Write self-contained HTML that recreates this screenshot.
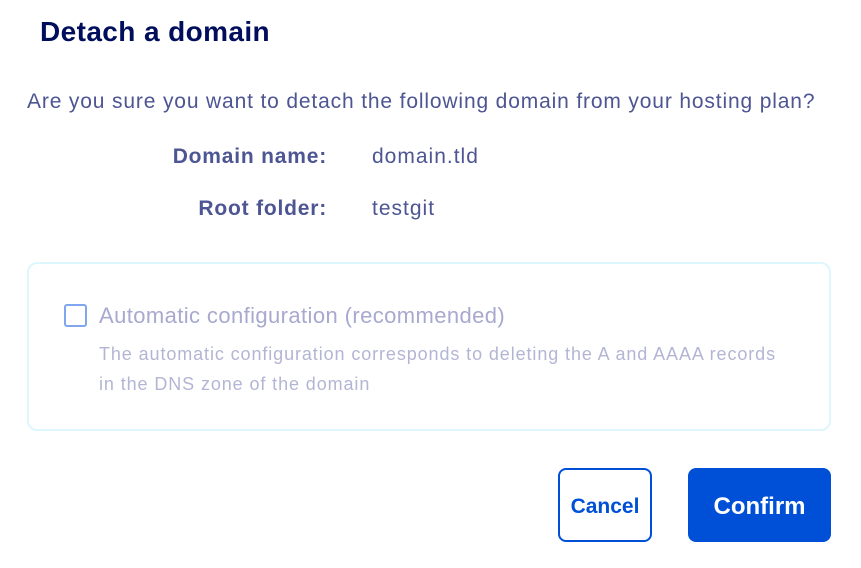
<!DOCTYPE html>
<html><head><style>
body{margin:0;width:861px;height:568px;background:#fff;font-family:"Liberation Sans",sans-serif;position:relative;overflow:hidden}
.a{position:absolute;white-space:nowrap}
</style></head><body>
<div class="a" style="left:40px;top:16px;font-size:28px;font-weight:bold;color:#000e5c;letter-spacing:0.4px">Detach a domain</div>
<div class="a" style="left:27px;top:90px;font-size:21px;color:#4d5592;letter-spacing:0.85px">Are you sure you want to detach the following domain from your hosting plan?</div>
<div class="a" style="left:0;width:327px;text-align:right;top:145px;font-size:21px;font-weight:bold;color:#4d5592;letter-spacing:0.8px">Domain name:</div>
<div class="a" style="left:372px;top:145px;font-size:21px;color:#4d5592;letter-spacing:1px">domain.tld</div>
<div class="a" style="left:0;width:327px;text-align:right;top:197px;font-size:21px;font-weight:bold;color:#4d5592;letter-spacing:0.8px">Root folder:</div>
<div class="a" style="left:372px;top:197px;font-size:21px;color:#4d5592;letter-spacing:1px">testgit</div>
<div class="a" style="left:27px;top:262px;width:800px;height:165px;border:2px solid #def6fd;border-radius:10px"></div>
<div class="a" style="left:64px;top:304px;width:19px;height:19px;border:2px solid #7fa6ee;border-radius:3px"></div>
<div class="a" style="left:99px;top:303px;font-size:22px;color:#a7a9cf;letter-spacing:0.4px">Automatic configuration (recommended)</div>
<div class="a" style="left:99px;top:339px;font-size:18px;color:#b3b5d4;line-height:30px;letter-spacing:0.9px">The automatic configuration corresponds to deleting the A and AAAA records<br>in the DNS zone of the domain</div>
<div class="a" style="left:558px;top:468px;width:90px;height:70px;border:2px solid #0050d7;border-radius:8px;color:#0050d7;font-weight:bold;font-size:21px;display:flex;align-items:center;justify-content:center;padding-top:4px;box-sizing:content-box;height:66px">Cancel</div>
<div class="a" style="left:688px;top:468px;width:143px;height:70px;padding-top:4px;background:#0050d7;border-radius:8px;color:#fff;font-weight:bold;font-size:24px;display:flex;align-items:center;justify-content:center">Confirm</div>
</body></html>
